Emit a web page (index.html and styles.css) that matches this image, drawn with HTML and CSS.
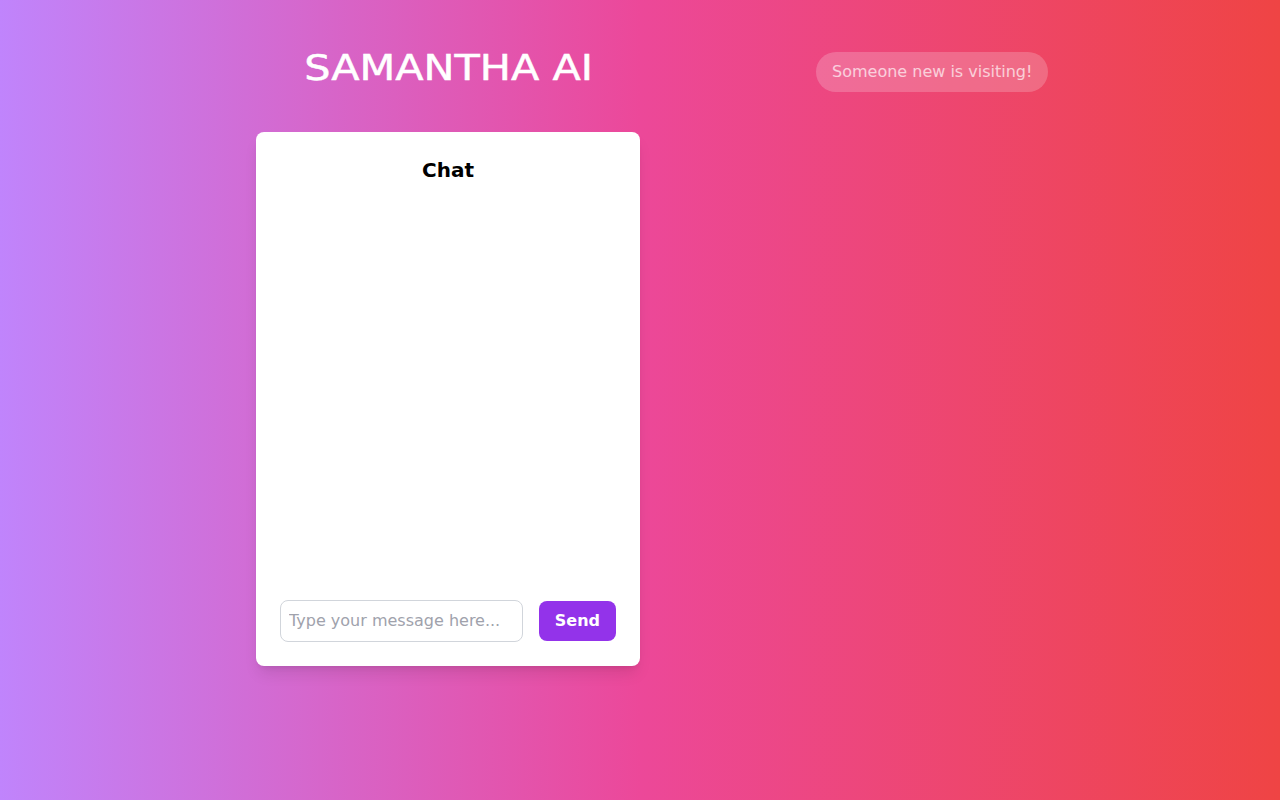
FILE: index.html
```html
<!DOCTYPE html>
<html lang="en">
<head>
<meta charset="utf-8">
<title>Samantha AI</title>
<link rel="stylesheet" href="styles.css">
</head>
<body>
<main class="page">
  <section class="left">
    <h1 class="logo"><span class="logo-text">SAMANTHA AI</span></h1>
    <div class="card">
      <h2 class="card-title">Chat</h2>
      <div class="messages"></div>
      <form class="composer">
        <input class="field" type="text" placeholder="Type your message here...">
        <button class="send" type="button">Send</button>
      </form>
    </div>
  </section>
  <aside class="right">
    <div class="toast">Someone new is visiting!</div>
  </aside>
</main>
</body>
</html>
```
FILE: styles.css
```css
* { box-sizing: border-box; }
html, body { margin: 0; height: 100%; }
body {
  background: linear-gradient(to right, #c084fc, #ec4899, #ef4444);
  font-family: "DejaVu Sans", sans-serif;
  font-size: 16px;
  overflow: hidden;
}
.page {
  display: flex;
  align-items: flex-start;
  gap: 176px;
  padding: 48px 0 0 256px;
  height: 800px;
}
.left {
  width: 384px;
  display: flex;
  flex-direction: column;
}
.logo {
  margin: 0 0 24px;
  height: 60px;
  line-height: 40px;
  text-align: center;
  color: #fff;
  font-family: "DejaVu Sans", sans-serif;
  font-weight: 400;
  font-size: 36px;
  white-space: nowrap;
}
.logo-text {
  display: inline-block;
  transform: translateX(1px) scaleX(1.15);
  -webkit-text-stroke: 0.5px #fff;
}
.card {
  height: 534px;
  padding: 24px;
  background: #fff;
  border-radius: 8px;
  box-shadow: 0 10px 15px -3px rgba(0,0,0,.1), 0 4px 6px -4px rgba(0,0,0,.1);
  display: flex;
  flex-direction: column;
}
.card-title {
  margin: 0 0 16px;
  font-size: 20px;
  line-height: 28px;
  font-weight: 700;
  text-align: center;
  color: #000;
}
.messages { flex: 1; }
.composer {
  display: flex;
  align-items: center;
  gap: 16px;
}
.field {
  flex: 1;
  min-width: 0;
  height: 42px;
  padding: 6px 8px 8px;
  border: 1px solid #d1d5db;
  border-radius: 8px;
  font: 16px "DejaVu Sans", sans-serif;
  color: #111827;
  background: #fff;
}
.field::placeholder { color: #a0a2ac; opacity: 1; }
.send {
  height: 40px;
  padding: 0 16px 2px;
  border: 0;
  border-radius: 8px;
  background: #9333ea;
  color: #fff;
  font: 700 16px "DejaVu Sans", sans-serif;
}
.right { padding-top: 4px; }
.toast {
  height: 40px;
  padding: 0 16px;
  line-height: 40px;
  border-radius: 20px;
  background: rgba(255,255,255,.28);
  color: #fff;
  opacity: .74;
  white-space: nowrap;
}
```
